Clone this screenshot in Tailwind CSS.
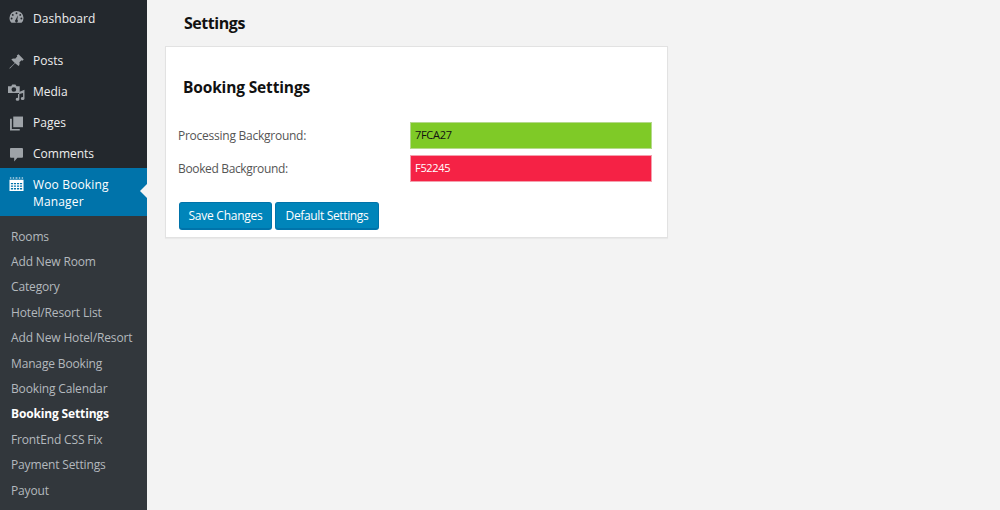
<!DOCTYPE html>
<html lang="en">
<head>
  <meta charset="UTF-8" />
  <title>Booking Settings</title>
  <script src="https://cdn.jsdelivr.net/npm/@tailwindcss/browser@4"></script>
</head>
<body class="bg-[#f3f3f3] font-['Open_Sans','Noto_Sans',sans-serif] text-[12px] overflow-hidden">
  <div class="flex h-[510px] w-[1000px] overflow-hidden">
    <!-- Sidebar -->
    <aside class="w-[147px] shrink-0 bg-[#23282d] text-[#eeeeee]">
      <div class="flex h-[37px] items-center pl-[9px] gap-[9px]">
        <svg class="w-[15px] h-[15px] text-[#9ea3a8] mb-[2px]" viewBox="0 0 16 16" fill="currentColor"><path fill-rule="evenodd" d="M8 1a7.500 7.500 0 0 0-7.500 7.500c0 2 .8 3.800 2.100 5.200h10.800a7.500 7.500 0 0 0 2.100-5.200A7.500 7.500 0 0 0 8 1zM8 2.500a1 1 0 1 1 0 2 1 1 0 0 1 0-2zM4 4.200a1 1 0 1 1 0 2 1 1 0 0 1 0-2zM12 4.200a1 1 0 1 1 0 2 1 1 0 0 1 0-2zM2.800 8a1 1 0 1 1 0 2 1 1 0 0 1 0-2zM13.200 8a1 1 0 1 1 0 2 1 1 0 0 1 0-2zM9.500 5.500l-.6 5a1.500 1.500 0 1 1-1.800 0z"/></svg>
        <span class="tracking-[0.05px]">Dashboard</span>
      </div>
      <div class="flex flex-col pt-[7px]">
        <div class="flex h-[31px] items-center pl-[9px] gap-[9px] pt-[3px]">
          <svg class="w-[15px] h-[15px] text-[#9ea3a8]" viewBox="0 0 16 16" fill="currentColor"><path d="M10.200.3l5.500 5.500-1.300 1.300-1-.5-2.300 2.300c.5 1.600.2 3-.8 4L6.500 9.800 1.300 15.200.3 15.700l.5-1 5.400-5.200L2.500 5.800c1-1 2.400-1.300 4-.8l2.300-2.300-.5-1z"/></svg>
          <span>Posts</span>
        </div>
        <div class="flex h-[31px] items-center pl-[8px] gap-[8px] pt-[3px]">
          <svg class="w-[17px] h-[17px] text-[#9ea3a8]" viewBox="0 0 16 16" fill="currentColor"><path fill-rule="evenodd" d="M0 2h3l1-1.500h3L8 2h3v6.500H0zM5.500 3a2.200 2.200 0 1 0 0 4.400 2.200 2.200 0 0 0 0-4.400z"/><path d="M15.500 5.500v8.300a1.700 1.400 0 1 1-1.300-1.400V8.500l-3.500.8v5.200a1.700 1.400 0 1 1-1.300-1.400V9.500h1v-2z"/></svg>
          <span>Media</span>
        </div>
        <div class="flex h-[31px] items-center pl-[10px] gap-[10px] pt-[3px]">
          <svg class="w-[13px] h-[15px] text-[#9ea3a8]" viewBox="0 0 14 16" fill="currentColor"><path d="M3.500.5H14V12H3.500z"/><path d="M2 3H0v12.500h10.500V14H2z"/></svg>
          <span>Pages</span>
        </div>
        <div class="flex h-[31px] items-center pl-[10px] gap-[10px] pt-[3px]">
          <svg class="w-[13px] h-[15px] text-[#9ea3a8]" viewBox="0 0 14 16" fill="currentColor"><path d="M1 1h12a1 1 0 0 1 1 1v8.500a1 1 0 0 1-1 1H8L4.500 15.500v-4H1a1 1 0 0 1-1-1V2a1 1 0 0 1 1-1z"/></svg>
          <span>Comments</span>
        </div>
        <div class="relative flex h-[48px] items-start bg-[#0073aa] text-white pl-[9px] gap-[9px] pt-[8px] leading-[17px]">
          <svg class="w-[15px] h-[15px] mt-[1px] shrink-0" viewBox="0 0 16 16" fill="currentColor"><path fill-rule="evenodd" d="M1 .5h1.500v1H1zM4 .5h1.500v1H4zM7 .5h2v1H7zM10.500.5H12v1h-1.500zM13.500.5H15v1h-1.500zM.5 3h15v12H.5zM2 6.300v1.500h2.300V6.300zm3.200 0v1.500h2.300V6.300zm3.300 0v1.500h2.300V6.300zm3.200 0v1.500H14V6.300zM2 9v1.500h2.300V9zm3.200 0v1.500h2.300V9zm3.300 0v1.500h2.300V9zm3.200 0v1.500H14V9zM2 11.700v1.500h2.300v-1.500zm3.200 0v1.500h2.300v-1.500zm3.300 0v1.500h2.300v-1.500zm3.200 0v1.500H14v-1.500z"/></svg>
          <span class="w-[95px] tracking-[0.15px]">Woo Booking Manager</span>
          <span class="absolute right-0 top-[16px] border-y-[7px] border-r-[7px] border-y-transparent border-r-[#f3f3f3]"></span>
        </div>
      </div>
      <ul class="bg-[#32373c] h-[295px] pt-[7.5px] text-[#b4b9be] text-[12px] tracking-[-0.15px] leading-[25.4px]">
        <li class="pl-[11px]">Rooms</li>
        <li class="pl-[11px]">Add New Room</li>
        <li class="pl-[11px]">Category</li>
        <li class="pl-[11px]">Hotel/Resort List</li>
        <li class="pl-[11px]">Add New Hotel/Resort</li>
        <li class="pl-[11px]">Manage Booking</li>
        <li class="pl-[11px]">Booking Calendar</li>
        <li class="pl-[11px] text-white font-bold">Booking Settings</li>
        <li class="pl-[11px]">FrontEnd CSS Fix</li>
        <li class="pl-[11px]">Payment Settings</li>
        <li class="pl-[11px]">Payout</li>
      </ul>
    </aside>

    <!-- Main -->
    <main class="flex-1 pl-[18px] text-[#555]">
      <h1 class="pl-[19px] pt-[13px] h-[46px] text-[16px] tracking-[-0.45px] leading-[21px] font-bold text-[#111]">Settings</h1>
      <div class="w-[503px] h-[192px] bg-white border border-[#e2e2e2] shadow-[0_1px_1px_rgba(0,0,0,0.04)] pl-[12px]">
        <h2 class="pl-[5px] pt-[30px] h-[75px] text-[15.5px] tracking-[-0.15px] leading-[21px] font-bold text-[#111]">Booking Settings</h2>
        <div class="flex h-[27px] items-center">
          <label class="w-[232px] pt-[1px] tracking-[-0.25px]">Processing Background:</label>
          <div class="w-[242px] h-[27px] bg-[#7fca27] border border-[#b5d98c] pl-[4px] text-[#111] text-[11px] tracking-[-0.3px] leading-[24px]">7FCA27</div>
        </div>
        <div class="flex h-[27px] items-center mt-[6px]">
          <label class="w-[232px] pt-[1px] tracking-[-0.35px]">Booked Background:</label>
          <div class="w-[242px] h-[27px] bg-[#f52245] border border-[#f4a0ae] pl-[4px] text-white text-[11px] tracking-[-0.3px] leading-[24px]">F52245</div>
        </div>
        <div class="flex gap-[3px] mt-[20px] pl-[1px]">
          <button class="w-[93px] h-[28px] rounded-[3px] bg-[#0085ba] border border-[#0073aa] border-b-[2px] text-white text-[12px] tracking-[-0.25px]">Save Changes</button>
          <button class="w-[104px] h-[28px] rounded-[3px] bg-[#0085ba] border border-[#0073aa] border-b-[2px] text-white text-[12px] tracking-[-0.35px] pt-[1px]">Default Settings</button>
        </div>
      </div>
    </main>
  </div>
</body>
</html>
